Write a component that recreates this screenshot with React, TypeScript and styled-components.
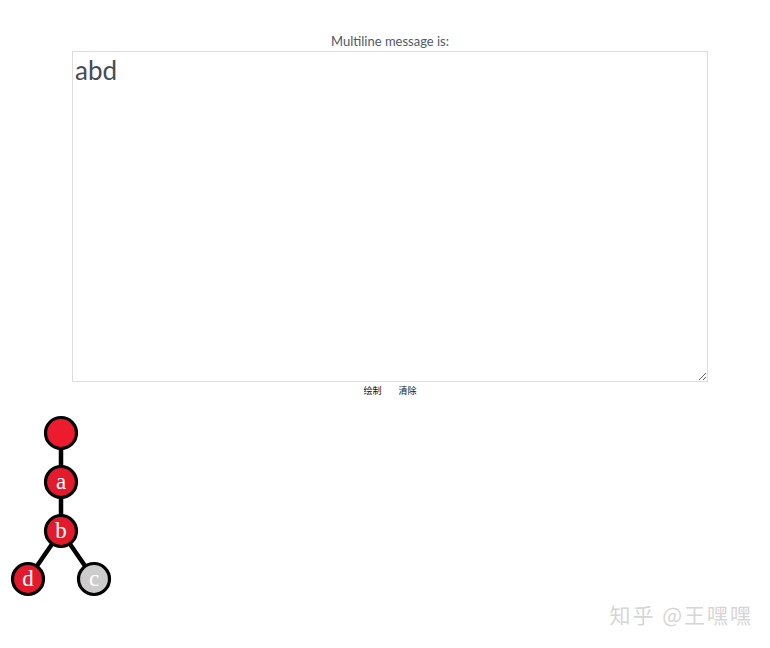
import React from "react";
import styled, { createGlobalStyle } from "styled-components";

const Global = createGlobalStyle`
  html, body { margin: 0; padding: 0; background: #fff; }
  body { width: 770px; height: 648px; overflow: hidden; position: relative; }
`;

const Page = styled.div`
  position: relative;
  width: 770px;
  height: 648px;
  padding-top: 33px;
  box-sizing: border-box;
`;

const Form = styled.div`
  display: flex;
  flex-direction: column;
  align-items: center;
  margin-left: 72px;
  width: 636px;
`;

const Label = styled.div`
  font-family: "Lato", "Open Sans", sans-serif;
  font-size: 13px;
  line-height: 17px;
  color: #4f5a66;
  margin-bottom: 1px;
`;

const Area = styled.textarea`
  width: 636px;
  height: 331px;
  box-sizing: border-box;
  border: 1px solid #dcdcdc;
  border-radius: 0;
  padding: 2px 2px;
  margin: 0;
  font-family: "Lato", "Open Sans", sans-serif;
  font-size: 26px;
  line-height: 32px;
  color: #444c55;
  resize: both;
  outline: none;
  display: block;
`;

const Buttons = styled.div`
  display: flex;
  gap: 17px;
  margin-top: 3px;
`;

const TextButton = styled.button`
  border: none;
  background: none;
  padding: 0;
  margin: 0;
  font-family: "Noto Sans CJK SC", sans-serif;
  font-size: 9px;
  line-height: 12px;
  color: #111;
  cursor: pointer;
`;

const TreeWrap = styled.div`
  margin-top: 15px;
  margin-left: 8px;
  width: 120px;
  height: 190px;
`;

const Watermark = styled.div`
  position: absolute;
  right: 17px;
  bottom: 19px;
  font-family: "Noto Sans CJK SC", sans-serif;
  font-size: 21px;
  letter-spacing: 2px;
  color: #d6d6d6;
  white-space: nowrap;
`;

type Node = { x: number; y: number; label: string; fill: string };

const nodes: Node[] = [
  { x: 53, y: 21, label: "", fill: "#ec1c2e" },
  { x: 53, y: 70, label: "a", fill: "#e21a2c" },
  { x: 53, y: 119, label: "b", fill: "#e21a2c" },
  { x: 20, y: 167, label: "d", fill: "#e21a2c" },
  { x: 86, y: 167, label: "c", fill: "#cccccc" },
];

const edges: [number, number][] = [
  [0, 1],
  [1, 2],
  [2, 3],
  [2, 4],
];

function Tree() {
  return (
    <svg width="120" height="190" viewBox="0 0 120 190">
      {edges.map(([a, b], i) => (
        <line
          key={i}
          x1={nodes[a].x}
          y1={nodes[a].y}
          x2={nodes[b].x}
          y2={nodes[b].y}
          stroke="#000"
          strokeWidth="4.5"
        />
      ))}
      {nodes.map((n, i) => (
        <g key={i}>
          <circle cx={n.x} cy={n.y} r="15.5" fill={n.fill} stroke="#000" strokeWidth="3.2" />
          {n.label && (
            <text
              x={n.x}
              y={n.y + 7}
              textAnchor="middle"
              fontFamily="'Liberation Serif', serif"
              fontSize="23"
              fill="#fff"
            >
              {n.label}
            </text>
          )}
        </g>
      ))}
    </svg>
  );
}

export default function App() {
  return (
    <Page>
      <Global />
      <Form>
        <Label>Multiline message is:</Label>
        <Area defaultValue="abd" />
        <Buttons>
          <TextButton>绘制</TextButton>
          <TextButton>清除</TextButton>
        </Buttons>
      </Form>
      <TreeWrap>
        <Tree />
      </TreeWrap>
      <Watermark>知乎 @王嘿嘿</Watermark>
    </Page>
  );
}
